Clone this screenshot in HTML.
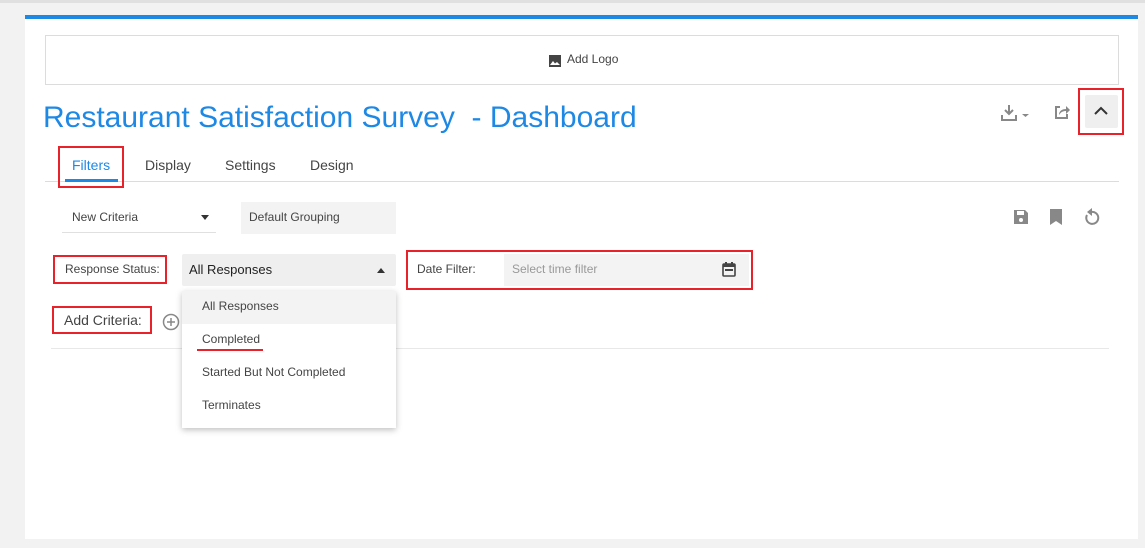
<!DOCTYPE html>
<html><head><meta charset="utf-8"><style>
*{margin:0;padding:0;box-sizing:border-box}
body{width:1145px;height:548px;background:#f2f2f2;font-family:"Liberation Sans",sans-serif;position:relative;overflow:hidden;color:#444}
.a{position:absolute}
.panel{left:25px;top:15px;width:1113px;height:524px;background:#fff;border-top:4px solid #1e88e5}
.red{border:2px solid #e8222a}
.t{font-size:13px;color:#444;white-space:nowrap}
</style></head><body>
<div class="a" style="left:0;top:0;width:1145px;height:3px;background:#e0e0e0"></div>
<div class="a panel"></div>
<div class="a" style="left:45px;top:35px;width:1074px;height:50px;border:1px solid #dcdcdc;background:#fff"></div>
<svg class="a" style="left:548px;top:54px" width="14" height="14" viewBox="0 0 14 14"><rect x="1" y="1" width="12" height="12" fill="#444"/><path d="M2 11l3-4 2 2.5 2-1.5 3 3z" fill="#fff"/></svg>
<div class="a t" style="left:567px;top:52px;font-size:12px">Add Logo</div>
<div class="a" style="left:43px;top:101px;font-size:30px;color:#1e88e5;white-space:nowrap;letter-spacing:0px">Restaurant Satisfaction Survey&nbsp; - Dashboard</div>
<svg class="a" style="left:1001px;top:104px" width="32" height="18" viewBox="0 0 32 18"><path d="M8 1v9M4 6l4 4 4-4M1 11v5h14v-5" stroke="#888" stroke-width="2" fill="none"/><path d="M21 10h7l-3.5 3z" fill="#888"/></svg>
<svg class="a" style="left:1054px;top:104px" width="16" height="16" viewBox="0 0 16 16"><path d="M6 3H2v11h11v-4" stroke="#888" stroke-width="2" fill="none"/><path d="M5 11c0-4 3-6 7-6V2l4 4-4 4V7c-3 0-5 1-7 4z" fill="#888"/></svg>
<div class="a red" style="left:1078px;top:88px;width:46px;height:47px"></div>
<div class="a" style="left:1085px;top:95px;width:33px;height:33px;background:#efefef;border-radius:2px"></div>
<svg class="a" style="left:1094px;top:106px" width="14" height="10" viewBox="0 0 14 10"><path d="M1 8l6-6 6 6" stroke="#333" stroke-width="2" fill="none"/></svg>
<div class="a" style="left:45px;top:181px;width:1074px;height:1px;background:#dcdcdc"></div>
<div class="a red" style="left:58px;top:146px;width:66px;height:42px"></div>
<div class="a t" style="left:72px;top:157px;font-size:14px;color:#1e88e5">Filters</div>
<div class="a" style="left:65px;top:179px;width:53px;height:3px;background:#1e88e5"></div>
<div class="a t" style="left:145px;top:157px;font-size:14px">Display</div>
<div class="a t" style="left:225px;top:157px;font-size:14px">Settings</div>
<div class="a t" style="left:310px;top:157px;font-size:14px">Design</div>
<div class="a t" style="left:72px;top:210px;font-size:12px">New Criteria</div>
<svg class="a" style="left:201px;top:215px" width="8" height="5"><path d="M0 0h8l-4 5z" fill="#333"/></svg>
<div class="a" style="left:62px;top:232px;width:154px;height:1px;background:#e0e0e0"></div>
<div class="a" style="left:241px;top:202px;width:155px;height:32px;background:#f3f3f3"></div>
<div class="a t" style="left:249px;top:210px;font-size:12px">Default Grouping</div>
<svg class="a" style="left:1013px;top:209px" width="16" height="16" viewBox="0 0 16 16"><path d="M1 1h11l3 3v11H1z" fill="#888"/><rect x="4" y="2" width="7" height="4" fill="#fff"/><circle cx="8" cy="11" r="2" fill="#fff"/></svg>
<svg class="a" style="left:1050px;top:209px" width="12" height="16" viewBox="0 0 12 16"><path d="M0 0h12v16l-6-4-6 4z" fill="#888"/></svg>
<svg class="a" style="left:1083px;top:208px" width="17" height="18" viewBox="0 0 17 18"><path d="M4 7a6 6 0 1 0 4-3" stroke="#888" stroke-width="2" fill="none"/><path d="M9 0v8L4 4z" fill="#888"/></svg>
<div class="a red" style="left:53px;top:255px;width:114px;height:29px"></div>
<div class="a t" style="left:65px;top:262px;font-size:12px">Response Status:</div>
<div class="a" style="left:182px;top:254px;width:214px;height:32px;background:#efefef;border-radius:2px"></div>
<div class="a t" style="left:189px;top:262px;font-size:13px;color:#222">All Responses</div>
<svg class="a" style="left:377px;top:268px" width="8" height="5"><path d="M0 5h8l-4-5z" fill="#333"/></svg>
<div class="a red" style="left:406px;top:250px;width:347px;height:40px"></div>
<div class="a t" style="left:417px;top:262px;font-size:12px">Date Filter:</div>
<div class="a" style="left:504px;top:254px;width:245px;height:32px;background:#f3f3f3"></div>
<div class="a t" style="left:512px;top:262px;font-size:12px;color:#999">Select time filter</div>
<svg class="a" style="left:722px;top:262px" width="14" height="15" viewBox="0 0 14 15"><rect x="1" y="2" width="12" height="12" rx="1" stroke="#444" stroke-width="1.6" fill="none"/><rect x="1" y="2" width="12" height="3" fill="#444"/><rect x="3" y="0" width="2" height="3" fill="#444"/><rect x="9" y="0" width="2" height="3" fill="#444"/><rect x="3" y="7" width="8" height="2" fill="#444"/></svg>
<div class="a red" style="left:52px;top:306px;width:100px;height:28px"></div>
<div class="a t" style="left:64px;top:312px;font-size:14px">Add Criteria:</div>
<svg class="a" style="left:162px;top:313px" width="18" height="18" viewBox="0 0 18 18"><circle cx="9" cy="9" r="7.5" stroke="#888" stroke-width="1.5" fill="none"/><path d="M9 5v8M5 9h8" stroke="#888" stroke-width="1.5"/></svg>
<div class="a" style="left:51px;top:348px;width:1058px;height:1px;background:#e8e8e8"></div>
<div class="a" style="left:182px;top:291px;width:214px;height:137px;background:#fff;box-shadow:0 2px 6px rgba(0,0,0,.25)"></div>
<div class="a" style="left:182px;top:291px;width:214px;height:33px;background:#f3f3f3"></div>
<div class="a t" style="left:202px;top:299px;font-size:12px">All Responses</div>
<div class="a t" style="left:202px;top:332px;font-size:12px">Completed</div>
<div class="a" style="left:197px;top:349px;width:66px;height:2px;background:#e8222a"></div>
<div class="a t" style="left:202px;top:365px;font-size:12px">Started But Not Completed</div>
<div class="a t" style="left:202px;top:398px;font-size:12px">Terminates</div>
</body></html>
